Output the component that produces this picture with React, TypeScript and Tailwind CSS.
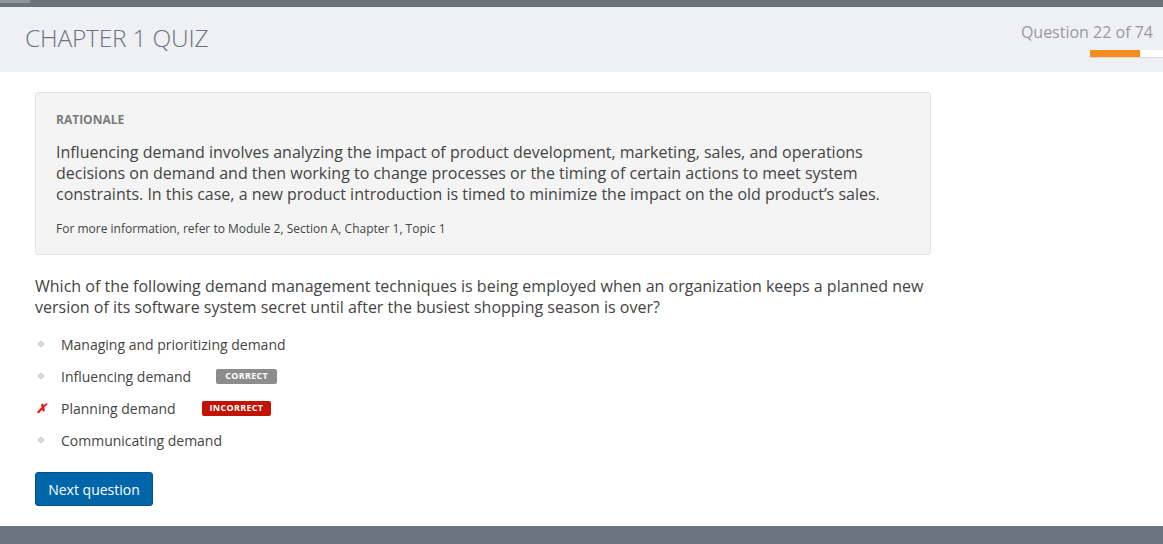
import React from "react";

const options = [
  { text: "Managing and prioritizing demand", badge: null as null | "correct" | "incorrect", wrong: false },
  { text: "Influencing demand", badge: "correct" as const, wrong: false },
  { text: "Planning demand", badge: "incorrect" as const, wrong: true },
  { text: "Communicating demand", badge: null, wrong: false },
];

function Diamond() {
  return (
    <svg width="8" height="8" viewBox="0 0 8 8" className="shrink-0">
      <path d="M4 0.5 L7.5 4 L4 7.5 L0.5 4 Z" fill="#cfcfcf" />
      <path d="M4 2.8 L5.2 4 L4 5.2 L2.8 4 Z" fill="#eeeeee" />
    </svg>
  );
}

export default function App() {
  return (
    <div
      className="w-[1163px] h-[544px] flex flex-col bg-white overflow-hidden"
      style={{ fontFamily: '"Open Sans", "Noto Sans", sans-serif' }}
    >
      <div className="h-[7px] bg-[#6b747d] shrink-0">
        <div className="w-[30px] h-[3px] bg-[#8f969d]" />
      </div>
      <div className="h-[65px] bg-[#eff0f3] flex justify-between shrink-0">
        <div className="pl-[25px] pt-[13px] text-[24.5px] font-light text-[#6a7580] tracking-[-0.2px]">
          CHAPTER 1 QUIZ
        </div>
        <div className="flex flex-col items-end pt-[14px] pr-[10px]">
          <div className="text-[16px] text-[#9a9a9a] leading-[22px]">Question 22 of 74</div>
        </div>
      </div>
      <div className="relative">
        <div className="absolute right-0 top-[-22px] w-[73px] h-[8px] bg-white border-b border-[#d9d9d9] flex">
          <div className="w-[50px] h-full bg-[#f48c1f]" />
        </div>
      </div>
      <div className="flex-1 pl-[35px] pt-[20px]">
        <div className="w-[896px] bg-[#f4f4f4] border border-[#e4e4e4] rounded-[3px] px-[20px] pt-[18px] pb-[17px]">
          <div className="text-[12px] font-bold text-[#7b7b7b] leading-[17px]">RATIONALE</div>
          <div className="mt-[14px] text-[16px] text-[#444] leading-[21px]">
            Influencing demand involves analyzing the impact of product development, marketing, sales, and operations
            decisions on demand and then working to change processes or the timing of certain actions to meet system
            constraints. In this case, a new product introduction is timed to minimize the impact on the old product’s sales.
          </div>
          <div className="mt-[15px] text-[12px] text-[#444] leading-[17px]">
            For more information, refer to Module 2, Section A, Chapter 1, Topic 1
          </div>
        </div>
        <div className="mt-[21px] w-[900px] text-[16px] text-[#444] leading-[21px]">
          Which of the following demand management techniques is being employed when an organization keeps a planned new
          version of its software system secret until after the busiest shopping season is over?
        </div>
        <div className="mt-[10px] flex flex-col">
          {options.map((o) => (
            <div key={o.text} className="h-[32px] flex items-center">
              <div className="w-[26px] flex items-center pl-[1px]">
                {o.wrong ? (
                  <span className="text-[#e11] text-[13px] font-bold italic leading-none">✗</span>
                ) : (
                  <span className="pl-[1px]"><Diamond /></span>
                )}
              </div>
              <span className="text-[14px] text-[#444]">{o.text}</span>
              {o.badge === "correct" && (
                <span className="ml-[25px] h-[15px] px-[9px] flex items-center bg-[#8c8c8c] rounded-[2px] text-white text-[9px] font-bold tracking-[0.3px]">
                  CORRECT
                </span>
              )}
              {o.badge === "incorrect" && (
                <span className="ml-[26px] h-[15px] px-[8px] flex items-center bg-[#c41200] rounded-[2px] text-white text-[9px] font-bold tracking-[0.3px]">
                  INCORRECT
                </span>
              )}
            </div>
          ))}
        </div>
        <button className="mt-[16px] w-[118px] h-[34px] bg-[#0066a9] border border-[#00528a] rounded-[3px] text-white text-[14px] font-medium flex items-center justify-center">
          Next question
        </button>
      </div>
      <div className="h-[18px] bg-[#6b747d] shrink-0" />
    </div>
  );
}
